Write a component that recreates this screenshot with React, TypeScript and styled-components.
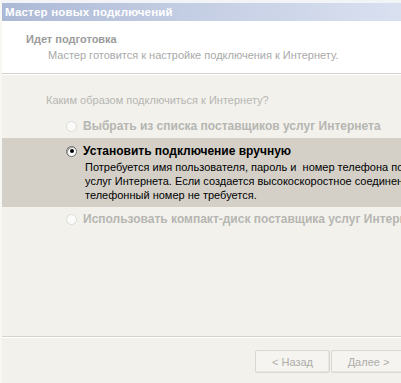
import React from "react";
import styled, { createGlobalStyle } from "styled-components";

const Global = createGlobalStyle`
  html, body { margin: 0; padding: 0; }
  body {
    background: #f2f1ec;
    width: 401px;
    height: 383px;
    overflow: hidden;
    font-family: "Liberation Sans", Arial, sans-serif;
  }
`;

const Window = styled.div`
  width: 401px;
  height: 383px;
  display: flex;
  flex-direction: column;
  overflow: hidden;
  background: #f2f1ec;
  border-left: 2px solid #f7f7f4;
  box-sizing: border-box;
`;

const TopStrip = styled.div`
  height: 3px;
  background: #f3f4f7;
  flex: none;
`;

const TitleBar = styled.div`
  height: 18px;
  flex: none;
  background: linear-gradient(to right, #acb9d6 0%, #c3cde3 45%, #d9e0f0 100%);
  color: #ffffff;
  font-family: "Liberation Sans", Arial, sans-serif;
  font-weight: bold;
  font-size: 11.5px;
  letter-spacing: 0.2px;
  line-height: 18px;
  padding-left: 3px;
  white-space: nowrap;
`;

const Header = styled.div`
  height: 52px;
  flex: none;
  background: #ffffff;
  box-sizing: border-box;
  padding: 11px 0 0 24px;
  white-space: nowrap;
`;

const HeaderTitle = styled.div`
  font-weight: bold;
  font-size: 11px;
  line-height: 14px;
  color: #9b9b9b;
`;

const HeaderSub = styled.div`
  font-size: 11px;
  line-height: 14px;
  margin-top: 2px;
  margin-left: 22px;
  color: #a9a9a9;
`;

const Rule = styled.div`
  height: 0;
  flex: none;
  border-top: 1px solid #d5d3cc;
  border-bottom: 1px solid #ffffff;
`;

const Content = styled.div`
  flex: 1;
  display: flex;
  flex-direction: column;
  padding-top: 19px;
  white-space: nowrap;
`;

const Question = styled.div`
  font-size: 11px;
  line-height: 13px;
  color: #b6b6b3;
  padding-left: 44px;
  margin-bottom: 7px;
`;

const Option = styled.div<{ $active?: boolean }>`
  background: ${(p) => (p.$active ? "#d4d0c8" : "transparent")};
  padding: ${(p) => (p.$active ? "4px 0 5px 64px" : "3px 0 3px 64px")};
`;

const OptionRow = styled.div`
  display: flex;
  align-items: center;
  gap: 6px;
  height: 18px;
`;

const Radio = styled.span<{ $checked?: boolean; $disabled?: boolean }>`
  width: 11px;
  height: 11px;
  border-radius: 50%;
  flex: none;
  box-sizing: border-box;
  background: ${(p) => (p.$disabled ? "#fbfbf9" : "#ffffff")};
  border: 1px solid ${(p) => (p.$disabled ? "#dcdcd6" : "#6c6c6c")};
  box-shadow: ${(p) => (p.$disabled ? "none" : "inset 1px 1px 0 #a0a0a0")};
  position: relative;
  &::after {
    content: "";
    display: ${(p) => (p.$checked ? "block" : "none")};
    position: absolute;
    left: 2.5px;
    top: 2.5px;
    width: 4px;
    height: 4px;
    border-radius: 50%;
    background: #000;
  }
`;

const OptionLabel = styled.span<{ $disabled?: boolean }>`
  font-weight: bold;
  font-size: 12px;
  color: ${(p) => (p.$disabled ? "#b6b6b2" : "#000000")};
`;

const Desc = styled.div`
  font-size: 11px;
  line-height: 14px;
  color: #000;
  padding-left: 19px;
`;

const Spacer = styled.div`
  flex: 1;
`;

const Footer = styled.div`
  flex: none;
  height: 47px;
  border-top: 1px solid #d6d3cc;
  box-shadow: inset 0 1px 0 #ffffff;
  display: flex;
  justify-content: flex-start;
  padding: 13px 0 0 253px;
  box-sizing: border-box;
  gap: 1px;
`;

const Button = styled.button`
  width: 75px;
  height: 23px;
  flex: none;
  background: #f5f4f0;
  border: 1px solid #d9d8d2;
  border-radius: 2px;
  box-shadow: inset -1px -1px 0 #e6e5df;
  font-family: "Liberation Sans", Arial, sans-serif;
  font-size: 11px;
  color: #adada9;
  padding: 0;
  white-space: nowrap;
`;

export default function App() {
  return (
    <>
      <Global />
      <Window>
        <TopStrip />
        <TitleBar>Мастер новых подключений</TitleBar>
        <Header>
          <HeaderTitle>Идет подготовка</HeaderTitle>
          <HeaderSub>Мастер готовится к настройке подключения к Интернету.</HeaderSub>
        </Header>
        <Rule />
        <Content>
          <Question>Каким образом подключиться к Интернету?</Question>
          <Option>
            <OptionRow>
              <Radio $disabled />
              <OptionLabel $disabled>Выбрать из списка поставщиков услуг Интернета</OptionLabel>
            </OptionRow>
          </Option>
          <Option $active>
            <OptionRow>
              <Radio $checked />
              <OptionLabel>Установить подключение вручную</OptionLabel>
            </OptionRow>
            <Desc>
              Потребуется имя пользователя, пароль и&nbsp; номер телефона поставщика
              <br />
              услуг Интернета. Если создается высокоскоростное соединение, то
              <br />
              телефонный номер не требуется.
            </Desc>
          </Option>
          <Option>
            <OptionRow>
              <Radio $disabled />
              <OptionLabel $disabled>Использовать компакт-диск поставщика услуг Интернета</OptionLabel>
            </OptionRow>
          </Option>
          <Spacer />
          <Footer>
            <Button disabled>&lt; Назад</Button>
            <Button disabled>Далее &gt;</Button>
          </Footer>
        </Content>
      </Window>
    </>
  );
}
